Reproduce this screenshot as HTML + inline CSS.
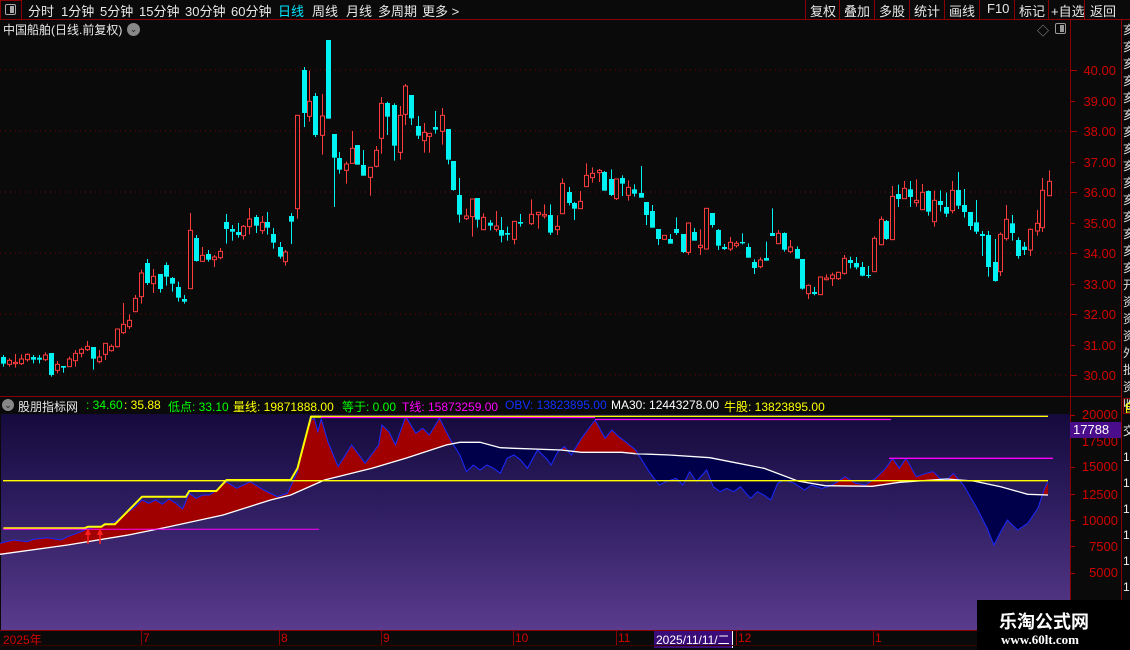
<!DOCTYPE html>
<html><head><meta charset="utf-8">
<style>
*{margin:0;padding:0;box-sizing:border-box}
body{width:1130px;height:650px;background:#0a0a0a;overflow:hidden;position:relative;font-family:"Liberation Sans","Noto Sans CJK SC",sans-serif;color:#ddd}
.a{position:absolute;white-space:nowrap}
.t{font-size:13px;top:1px;color:#e8e8e8}
.b{font-size:13px;top:1px;color:#e8e8e8}
.sep{position:absolute;top:0;width:1px;height:20px;background:#8a0000}
.ax{position:absolute;color:#d00000;font-size:13px;text-align:right;width:46px;left:1070px}
.h{font-size:12px;top:398px}
</style></head><body>
<!-- top bar -->
<div class="a" style="left:0;top:0;width:22px;height:20px;border:1px solid #8a0000"></div>
<div class="a" style="left:5px;top:4px;width:11px;height:11px;border:1px solid #aaa;border-radius:2px"><div style="position:absolute;right:1px;top:1px;width:4px;height:7px;background:#aaa"></div></div>
<div class="a" style="left:0;top:19px;width:1130px;height:1px;background:#8a0000"></div>
<div class="a t" style="left:28px">分时</div>
<div class="a t" style="left:61px">1分钟</div>
<div class="a t" style="left:100px">5分钟</div>
<div class="a t" style="left:139px">15分钟</div>
<div class="a t" style="left:185px">30分钟</div>
<div class="a t" style="left:231px">60分钟</div>
<div class="a t" style="left:278px;color:#00e8ff">日线</div>
<div class="a t" style="left:312px">周线</div>
<div class="a t" style="left:346px">月线</div>
<div class="a t" style="left:378px">多周期</div>
<div class="a t" style="left:422px">更多 &gt;</div>
<div class="sep" style="left:805px"></div><div class="sep" style="left:839px"></div><div class="sep" style="left:874px"></div><div class="sep" style="left:909px"></div><div class="sep" style="left:944px"></div><div class="sep" style="left:979px"></div><div class="sep" style="left:1014px"></div><div class="sep" style="left:1048px"></div><div class="sep" style="left:1084px"></div>
<div class="a b" style="left:810px">复权</div>
<div class="a b" style="left:844px">叠加</div>
<div class="a b" style="left:879px">多股</div>
<div class="a b" style="left:914px">统计</div>
<div class="a b" style="left:949px">画线</div>
<div class="a b" style="left:987px">F10</div>
<div class="a b" style="left:1019px">标记</div>
<div class="a b" style="left:1051px">+自选</div>
<div class="a b" style="left:1090px">返回</div>
<!-- second row -->
<div class="a" style="left:3px;top:21px;font-size:12px;color:#e8e8e8">中国船舶(日线.前复权)</div>
<div class="a" style="left:127px;top:23px;width:13px;height:13px;border-radius:50%;background:#888;color:#222;font-size:9px;text-align:center;line-height:13px">⌄</div>
<div class="a" style="left:1037px;top:22px;color:#999;font-size:12px">◇</div>
<div class="a" style="left:1055px;top:23px;width:11px;height:11px;border:1px solid #999;border-radius:2px"><div style="position:absolute;right:1px;top:1px;width:4px;height:7px;background:#999"></div></div>
<div class="a" style="left:1070px;top:20px;width:1px;height:612px;background:#8a0000"></div>
<div class="a" style="left:1121px;top:20px;width:1px;height:612px;background:#8a0000"></div>
<div class="a" style="left:1123px;top:22px;width:8px;font-size:12px;line-height:17px;color:#ddd;overflow:hidden;white-space:normal;word-break:break-all">亥亥亥亥亥亥亥亥亥亥亥亥亥亥亥开资资资外批资收</div>
<!-- price axis -->
<div class="ax" style="top:63px">40.00</div>
<div class="ax" style="top:94px">39.00</div>
<div class="ax" style="top:124px">38.00</div>
<div class="ax" style="top:155px">37.00</div>
<div class="ax" style="top:185px">36.00</div>
<div class="ax" style="top:216px">35.00</div>
<div class="ax" style="top:246px">34.00</div>
<div class="ax" style="top:277px">33.00</div>
<div class="ax" style="top:307px">32.00</div>
<div class="ax" style="top:338px">31.00</div>
<div class="ax" style="top:368px">30.00</div>
<!-- separator -->
<div class="a" style="left:0;top:396px;width:1121px;height:1px;background:#8a0000"></div>
<!-- indicator header -->
<div class="a" style="left:2px;top:399px;width:12px;height:12px;border-radius:50%;background:#888;color:#222;font-size:9px;text-align:center;line-height:12px">⌄</div>
<div class="a h" style="left:18px;color:#e8e8e8">股朋指标网</div>
<div class="a h" style="left:86px;color:#00ff00">: 34.60</div>
<div class="a h" style="left:124px;color:#ffff00">: 35.88</div>
<div class="a h" style="left:168px;color:#00ff00">低点: 33.10</div>
<div class="a h" style="left:233px;color:#ffff00">量线: 19871888.00</div>
<div class="a h" style="left:342px;color:#00ff00">等于: 0.00</div>
<div class="a h" style="left:402px;color:#ff00ff">T线: 15873259.00</div>
<div class="a h" style="left:505px;color:#1030ff">OBV: 13823895.00</div>
<div class="a h" style="left:611px;color:#ffffff">MA30: 12443278.00</div>
<div class="a h" style="left:724px;color:#ffff00">牛股: 13823895.00</div>
<div class="a" style="left:1123px;top:398px;width:8px;height:16px;border:1px solid #8a0000;color:#ff0;font-size:12px;overflow:hidden">自</div>
<!-- indicator panel -->
<div class="a" style="left:1px;top:414px;width:1069px;height:216px;background:linear-gradient(#150a3c,#2c1c5e 40%,#5a3b8d)"></div>
<!-- indicator axis -->
<div class="ax" style="top:407px;width:48px">20000</div>
<div class="ax" style="top:434px;width:48px">17500</div>
<div class="a" style="left:1070px;top:422px;width:51px;height:16px;background:#4a0e8c;color:#fff;font-size:13px;padding-left:3px;line-height:16px">17788</div>
<div class="ax" style="top:459px;width:48px">15000</div>
<div class="ax" style="top:487px;width:48px">12500</div>
<div class="ax" style="top:513px;width:48px">10000</div>
<div class="ax" style="top:539px;width:48px">7500</div>
<div class="ax" style="top:565px;width:48px">5000</div>
<div class="a" style="left:1123px;top:418px;width:8px;font-size:12px;line-height:26px;color:#eee;overflow:hidden;white-space:normal;word-break:break-all">交1111111</div>
<svg class="a" style="left:0;top:0" width="1130" height="650" id="sv">
<defs>
<clipPath id="above"><polygon id="cpa" points=""/></clipPath>
<clipPath id="below"><polygon id="cpb" points=""/></clipPath>
</defs>
<g stroke="#7a0000" stroke-width="1" stroke-dasharray="1,4">
<line x1="0" y1="70" x2="1068" y2="70"/><line x1="0" y1="131" x2="1068" y2="131"/><line x1="0" y1="192" x2="1068" y2="192"/><line x1="0" y1="253" x2="1068" y2="253"/><line x1="0" y1="314" x2="1068" y2="314"/><line x1="0" y1="375" x2="1068" y2="375"/>
</g>
<g stroke="#b00000" stroke-width="1">
<line x1="1071" y1="70.5" x2="1077" y2="70.5"/><line x1="1071" y1="101.5" x2="1075" y2="101.5"/><line x1="1071" y1="131.5" x2="1077" y2="131.5"/><line x1="1071" y1="162.5" x2="1075" y2="162.5"/><line x1="1071" y1="192.5" x2="1077" y2="192.5"/><line x1="1071" y1="223.5" x2="1075" y2="223.5"/><line x1="1071" y1="253.5" x2="1077" y2="253.5"/><line x1="1071" y1="284.5" x2="1075" y2="284.5"/><line x1="1071" y1="314.5" x2="1077" y2="314.5"/><line x1="1071" y1="345.5" x2="1075" y2="345.5"/><line x1="1071" y1="375.5" x2="1077" y2="375.5"/>
<line x1="1071" y1="415.5" x2="1075" y2="415.5"/><line x1="1071" y1="467.5" x2="1075" y2="467.5"/><line x1="1071" y1="494.5" x2="1075" y2="494.5"/><line x1="1071" y1="520.5" x2="1075" y2="520.5"/><line x1="1071" y1="546.5" x2="1075" y2="546.5"/><line x1="1071" y1="573.5" x2="1075" y2="573.5"/>
</g>
<g id="candles"></g>
<g id="ind"></g>
</svg>
<!-- bottom axis -->
<div class="a" style="left:0;top:630px;width:1121px;height:1px;background:#8a0000"></div>
<div class="a" style="left:0;top:631px;width:1121px;height:14px;background:#0a0a0a;color:#d00000;font-size:12px">
<span class="a" style="left:3px;top:0">2025年</span>
<span class="a" style="left:141px;top:0;border-left:1px solid #8a0000;padding-left:1px">7</span>
<span class="a" style="left:279px;top:0;border-left:1px solid #8a0000;padding-left:1px">8</span>
<span class="a" style="left:381px;top:0;border-left:1px solid #8a0000;padding-left:1px">9</span>
<span class="a" style="left:513px;top:0;border-left:1px solid #8a0000;padding-left:1px">10</span>
<span class="a" style="left:616px;top:0;border-left:1px solid #8a0000;padding-left:1px">11</span>
<span class="a" style="left:654px;top:0;background:#3a0c7a;color:#fff;padding:0 2px;border-right:1px solid #fff">2025/11/11/二</span>
<span class="a" style="left:736px;top:0;border-left:1px solid #8a0000;padding-left:1px">12</span>
<span class="a" style="left:873px;top:0;border-left:1px solid #8a0000;padding-left:1px">1</span>
</div>
<div class="a" style="left:0;top:645px;width:1121px;height:1px;background:#3a0000"></div>
<!-- watermark -->
<div class="a" style="left:977px;top:600px;width:153px;height:50px;background:#000">
<div class="a" style="left:22px;top:8px;color:#fff;font-size:18px;font-weight:bold;font-family:'Noto Sans CJK SC',sans-serif">乐淘公式网</div>
<div class="a" style="left:24px;top:32px;color:#fff;font-size:13px;font-weight:bold;font-family:'Liberation Serif',serif">www.60lt.com</div>
</div>
<script>
var A=[[10,966,986,960,995,0],[28,976,988,970,995,1],[45,982,986,957,998,1],[63,972,986,958,990,1],[81,958,974,955,980,1],[99,966,974,960,985,0],[116,968,974,960,985,0],[134,960,974,952,978,1],[152,954,1020,954,1025,0],[170,988,1006,978,1015,1],[187,993,998,993,1013,0],[205,972,995,965,995,1],[223,955,977,945,995,1],[241,943,955,938,967,1],[258,934,944,918,948,1],[276,936,971,936,1004,0],[294,966,980,945,985,1],[312,925,958,925,975,1],[329,934,947,928,950,1],[347,882,935,882,938,1],[365,868,893,804,897,1],[383,856,875,838,882,1],[400,790,830,780,830,1],[418,714,785,704,806,1],[436,684,744,672,750,0],[454,724,746,702,774,1],[472,717,762,717,773,0],[490,690,725,682,752,0],[508,729,746,726,770,0],[526,756,788,740,800,0],[543,792,800,780,806,0],[561,586,761,534,761,1],[579,609,678,600,680,0],[597,661,679,636,679,1],[614,657,674,645,680,0],[632,666,674,660,696,1],[650,649,668,639,673,1],[668,561,582,537,626,0],[685,582,590,570,617,0],[703,591,600,564,608,0],[720,574,602,570,614,1],[738,552,575,519,598,1],[756,546,572,540,594,0],[774,562,587,543,597,1],[791,561,578,531,599,0],[809,597,623,579,641,0],[827,636,665,621,671,0],[844,651,680,645,692,1],[862,543,560,534,627,0],[880,241,521,241,551,1],[898,105,234,96,276,0],[915,199,244,107,260,1],[933,183,300,174,306,0],[951,243,301,177,359,1],[969,15,251,15,251,0],[987,297,368,297,516,0],[1004,369,404,351,416,0],[1022,387,406,380,446,1],[1040,340,385,288,385,1],[1057,330,389,330,389,0],[1075,390,422,345,422,0],[1093,397,427,397,482,1],[1111,346,394,333,397,1],[1128,205,310,186,356,1],[1146,204,245,200,300,0],[1164,210,332,205,377,0],[1182,241,352,213,374,1],[1199,153,238,147,270,1],[1217,180,250,180,270,0],[1235,273,302,243,312,0],[1253,292,317,264,353,1],[1270,295,304,295,353,1],[1288,276,284,228,296,0],[1306,241,289,219,329,1],[1324,282,374,282,388,0],[1341,378,465,378,467,0],[1359,480,539,429,563,0],[1377,543,551,521,555,1],[1395,492,545,492,605,1],[1412,489,554,489,578,0],[1430,547,584,535,584,1],[1448,563,572,555,586,0],[1466,573,583,528,590,1],[1483,585,602,546,622,0],[1501,594,599,575,617,0],[1519,559,613,559,628,1],[1537,561,566,537,575,0]];
var B=[[15,277,341,268,353,1],[33,223,251,178,255,1],[53,217,224,217,266,1],[71,223,228,193,236,1],[88,225,278,193,285,0],[106,259,269,226,285,1],[123,130,221,115,221,1],[141,156,189,141,196,0],[158,189,206,186,240,0],[175,184,206,153,206,1],[193,106,140,70,140,1],[210,100,113,82,128,1],[228,91,98,87,126,1],[245,96,152,93,152,0],[263,117,165,88,168,0],[280,117,176,117,180,1],[297,114,131,106,168,0],[315,142,166,121,182,1],[332,148,161,133,170,0],[350,159,173,78,173,0],[367,186,225,186,255,0],[384,213,263,195,263,0],[402,267,297,267,315,0],[419,286,298,286,298,1],[437,297,311,282,311,0],[454,267,279,232,285,0],[472,282,336,282,339,0],[489,249,337,247,345,1],[506,276,302,264,302,0],[524,316,323,268,345,1],[541,205,327,205,329,1],[558,219,255,219,263,0],[576,270,317,267,330,0],[593,321,327,312,330,0],[610,307,327,291,333,1],[628,310,317,303,323,1],[645,306,310,280,313,0],[663,321,353,310,353,0],[680,366,384,358,402,0],[698,360,380,352,385,1],[715,354,362,305,362,0],[733,279,288,205,288,0],[750,280,311,270,311,1],[768,279,329,277,335,0],[785,321,335,300,340,1],[803,327,356,319,356,0],[820,357,446,357,449,0],[837,436,461,433,477,1],[855,456,462,441,466,0],[872,411,464,411,464,1],[890,414,419,403,422,1],[907,405,416,398,438,1],[924,397,416,395,420,1],[942,355,400,345,404,1],[959,360,369,350,385,0],[977,369,382,351,388,0],[994,381,407,366,409,0],[1012,405,408,378,414,0],[1029,295,395,289,395,1],[1047,238,314,229,316,1],[1064,243,297,240,300,0],[1081,169,299,138,299,1],[1099,162,177,134,201,0],[1116,145,176,123,176,1],[1134,148,171,123,201,0],[1151,181,188,118,200,1],[1168,157,209,132,209,1],[1186,153,215,151,227,0],[1203,181,245,152,260,1],[1221,183,195,151,215,0],[1238,201,221,158,231,0],[1255,151,212,123,220,1],[1273,150,197,96,207,0],[1290,195,216,147,233,0],[1308,216,258,216,270,0],[1325,247,275,180,282,0],[1343,282,288,273,348,0],[1360,285,381,273,410,0],[1378,366,423,297,425,0],[1395,283,395,277,408,1],[1412,238,296,195,302,1],[1430,250,279,225,302,0],[1447,300,348,292,356,0],[1465,320,330,306,345,0],[1482,268,330,265,348,1],[1500,250,273,210,287,1],[1517,151,263,114,276,1],[1535,124,167,91,167,1]];
var s='';
function add(c,x,y0){var cx=Math.round(x)+0.5,t=y0+c[1]/3,b=y0+c[2]/3,wt=y0+c[3]/3,wb=y0+c[4]/3;if(b-t<1)b=t+1;
if(c[5]){s+='<line x1="'+cx+'" y1="'+wt+'" x2="'+cx+'" y2="'+t+'" stroke="#ff3c3c"/><line x1="'+cx+'" y1="'+b+'" x2="'+cx+'" y2="'+wb+'" stroke="#ff3c3c"/><rect x="'+(cx-2)+'" y="'+t+'" width="4" height="'+(b-t)+'" fill="#0a0a0a" stroke="#ff3c3c"/>';}
else{s+='<line x1="'+cx+'" y1="'+wt+'" x2="'+cx+'" y2="'+wb+'" stroke="#00f2f2"/><rect x="'+(cx-2.5)+'" y="'+t+'" width="5" height="'+(b-t)+'" fill="#00f2f2"/>';}}
A.forEach(function(c){add(c,c[0]/2.958,35)});
B.forEach(function(c){if(c[0]<20)return;add(c,520+c[0]/2.904,140)});
document.getElementById('candles').innerHTML=s;
var E=[[0,415],[20,405],[40,410],[50,403],[70,398],[90,405],[100,395],[120,380],[130,370],[150,365],[170,350],[190,320],[200,305],[210,285],[220,295],[230,285],[240,298],[250,282],[260,295],[270,312],[280,265],[290,280],[300,270],[310,270],[320,255],[335,230],[350,250],[370,230],[390,255],[410,275],[425,265],[440,200],[450,110],[460,45],[465,40],[470,80],[475,42],[485,110],[500,185],[520,120],[540,175],[560,120],[565,60],[575,80],[585,120],[600,35],[615,85],[625,70],[635,90],[650,40],[665,100],[680,150],[690,200],[700,180],[710,195],[720,180],[730,190],[740,205],[750,160],[760,150],[770,165],[780,190],[795,135],[810,165],[815,180],[825,140],[835,125],[845,150],[860,100],[880,45],[895,100],[905,75],[915,95],[925,110],[940,135],[960,200],[975,240],[985,230],[1000,220],[1010,240],[1020,200],[1030,230],[1045,195],[1055,245],[1065,260],[1075,250],[1085,260],[1095,245],[1110,280],[1120,260],[1130,270],[1140,285],[1150,235],[1160,225],[1175,235],[1190,255],[1200,240],[1215,250],[1225,245],[1235,235],[1250,215],[1265,235],[1280,240],[1295,220],[1310,190],[1320,160],[1330,190],[1340,160],[1355,215],[1370,205],[1380,200],[1390,220],[1400,225],[1410,205],[1425,240],[1445,310],[1460,370],[1470,420],[1480,380],[1490,345],[1505,375],[1520,355],[1535,310],[1545,250],[1550,230]];
var M=[[0,448],[100,420],[190,390],[250,365],[330,330],[400,285],[430,270],[480,225],[550,190],[600,160],[660,120],[680,112],[710,112],[740,128],[760,130],[830,135],[860,142],[920,142],[940,146],[990,150],[1050,158],[1080,170],[1130,190],[1180,228],[1220,242],[1290,244],[1330,232],[1400,222],[1440,228],[1480,245],[1520,268],[1550,270]];
function P(a){return a.map(function(p){return (p[0]/1.479).toFixed(1)+','+(405+p[1]/3).toFixed(1)}).join(' ')}
var Ms=P(M),Es=P(E),Mr=P(M.slice().reverse());
document.getElementById('cpa').setAttribute('points','0,414 '+Ms+' 1049,414');
document.getElementById('cpb').setAttribute('points','0,630 '+Ms+' 1049,630');
var poly=Es+' '+Mr;
var g='';
g+='<polygon points="'+poly+'" fill="#a00000" clip-path="url(#above)"/>';
g+='<polygon points="'+poly+'" fill="#00004a" clip-path="url(#below)"/>';
g+='<polyline points="'+Es+'" fill="none" stroke="#1a2aff" stroke-width="1"/>';
g+='<polyline points="'+Ms+'" fill="none" stroke="#ffffff" stroke-width="1.3"/>';
g+='<line x1="3" y1="480.7" x2="1048" y2="480.7" stroke="#ffff00" stroke-width="1.3"/>';
g+='<line x1="311" y1="416.3" x2="1048" y2="416.3" stroke="#ffff00" stroke-width="1.3"/>';
g+='<polyline points="'+P([[5,370],[125,370],[130,365],[150,365],[155,358],[170,358],[210,275],[275,275],[280,258],[320,258],[335,225],[430,225],[440,190],[460,35],[475,35]])+'" fill="none" stroke="#ffff00" stroke-width="2"/>';
g+='<line x1="3" y1="529.3" x2="319" y2="529.3" stroke="#ff00ff" stroke-width="1"/>';
g+='<line x1="321" y1="417.5" x2="595" y2="417.5" stroke="#ff00ff" stroke-width="1.3"/>';
g+='<line x1="595" y1="419.5" x2="891" y2="419.5" stroke="#ff00ff" stroke-width="1.3"/>';
g+='<line x1="889" y1="458.3" x2="1053" y2="458.3" stroke="#ff00ff" stroke-width="1.3"/>';
g+='<line x1="88" y1="532" x2="88" y2="544" stroke="#ff2020" stroke-width="1.5"/><polygon points="85,535 88,528 91,535" fill="#ff2020"/>';
g+='<line x1="100" y1="532" x2="100" y2="544" stroke="#ff2020" stroke-width="1.5"/><polygon points="97,535 100,528 103,535" fill="#ff2020"/>';
document.getElementById('ind').innerHTML=g;
</script>
</body></html>
